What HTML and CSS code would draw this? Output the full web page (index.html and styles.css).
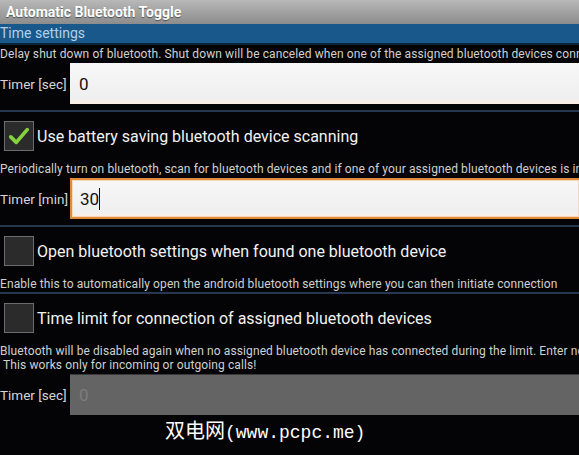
FILE: index.html
```html
<!DOCTYPE html>
<html lang="en">
<head>
  <meta charset="UTF-8">
  <title>Automatic Bluetooth Toggle</title>
  <link rel="stylesheet" href="styles.css">
</head>
<body>
  <div class="titlebar">Automatic Bluetooth Toggle</div>
  <div class="section-header">Time settings</div>

  <div class="desc">Delay shut down of bluetooth. Shut down will be canceled when one of the assigned bluetooth devices connects.</div>
  <div class="field">
    <span class="field-label">Timer [sec]</span>
    <div class="input">0</div>
  </div>

  <div class="separator"></div>
  <label class="check-row">
    <span class="checkbox checked">
      <svg viewBox="0 0 24 24" width="22" height="22"><path d="M3 13 L9 19 L21 5" fill="none" stroke="#86d13e" stroke-width="4" stroke-linecap="round" stroke-linejoin="round"/></svg>
    </span>
    <span class="check-text">Use battery saving bluetooth device scanning</span>
  </label>
  <div class="desc">Periodically turn on bluetooth, scan for bluetooth devices and if one of your assigned bluetooth devices is in range, connect.</div>
  <div class="field">
    <span class="field-label">Timer [min]</span>
    <div class="input focused">30<span class="caret"></span></div>
  </div>

  <div class="separator"></div>
  <label class="check-row">
    <span class="checkbox"></span>
    <span class="check-text">Open bluetooth settings when found one bluetooth device</span>
  </label>
  <div class="desc">Enable this to automatically open the android bluetooth settings where you can then initiate connection</div>

  <div class="separator sep-tight"></div>
  <label class="check-row">
    <span class="checkbox"></span>
    <span class="check-text">Time limit for connection of assigned bluetooth devices</span>
  </label>
  <div class="desc">Bluetooth will be disabled again when no assigned bluetooth device has connected during the limit. Enter nothing for no limit.<br>&nbsp;This works only for incoming or outgoing calls!</div>
  <div class="field">
    <span class="field-label">Timer [sec]</span>
    <div class="input disabled">0</div>
  </div>

  <div class="watermark"><span class="cjk">双电网</span>(www.pcpc.me)</div>
</body>
</html>
```

FILE: styles.css
```css
body {
  margin: 0;
  width: 579px;
  height: 455px;
  overflow: hidden;
  background: #040406;
  font-family: Roboto, "Noto Sans", sans-serif;
  color: #e6e6e6;
}
.titlebar {
  height: 24px;
  line-height: 24px;
  padding-left: 6px;
  background: linear-gradient(#b8b8b8, #8c8c8c);
  color: #fff;
  font-weight: 700;
  font-size: 14px;
  text-shadow: 0 1px 1px rgba(0,0,0,0.5);
  white-space: nowrap;
}
.section-header {
  height: 19px;
  line-height: 19px;
  background: #19588a;
  color: #b3d0ea;
  font-size: 14px;
  border-bottom: 2px solid #0c2438;
}
.desc {
  font-size: 12px;
  line-height: 14px;
  letter-spacing: 0.1px;
  color: #d0d0d0;
  white-space: nowrap;
  overflow: hidden;
  margin-top: 2px;
}
.field {
  display: flex;
  align-items: center;
  height: 41px;
  margin-top: 2px;
}
.field-label {
  width: 70px;
  flex: none;
  font-size: 13.5px;
  color: #d6d6d6;
  white-space: nowrap;
}
.input {
  flex: 1;
  height: 41px;
  box-sizing: border-box;
  padding-left: 9px;
  display: flex;
  align-items: center;
  background: linear-gradient(#f7f7f7, #efefef 85%, #fbeee6);
  color: #111;
  font-size: 17px;
}
.input.focused {
  border: 2px solid #e08a3a;
  border-right: none;
  box-shadow: inset 0 0 0 1px #f6d8b8;
  padding-left: 8px;
}
.caret {
  display: inline-block;
  width: 1px;
  height: 22px;
  background: #111;
}
.input.disabled {
  background: #646464;
  color: #7c7c7c;
  border-top: 1px solid #3a3a3a;
}
.separator {
  height: 2px;
  background: #26384e;
  margin-top: 6px;
}
.sep-tight {
  margin-top: 1px;
}
.check-row {
  display: flex;
  align-items: center;
  height: 48px;
}
.checkbox {
  width: 28px;
  height: 28px;
  margin-left: 4px;
  margin-right: 3px;
  border: 1px solid #6c6c6c;
  background: #2b2b2b;
  display: flex;
  align-items: center;
  justify-content: center;
  flex: none;
}
.check-text {
  font-size: 16px;
  color: #f2f2f2;
  white-space: nowrap;
}
.watermark {
  margin-top: 2px;
  padding-left: 165px;
  height: 26px;
  line-height: 26px;
  font-family: "Liberation Mono", "Noto Sans CJK SC", monospace;
  font-size: 18px;
  color: #fff;
  white-space: nowrap;
}
.cjk {
  font-family: "Noto Sans CJK SC", sans-serif;
  font-size: 20px;
}
```
